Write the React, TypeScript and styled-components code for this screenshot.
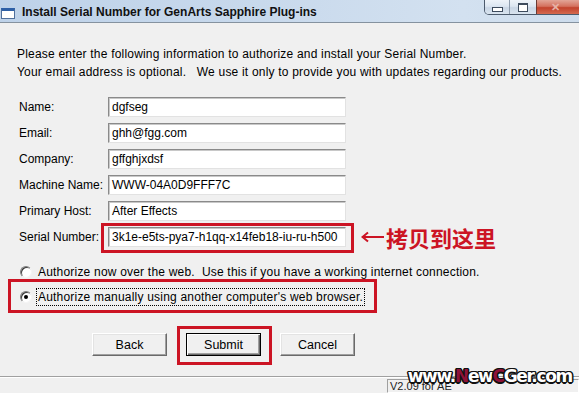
import React from "react";
import styled, { createGlobalStyle } from "styled-components";

const Global = createGlobalStyle`
  html, body { margin: 0; padding: 0; background: #f0f0f0; }
  body { font-family: "Liberation Sans", Arial, sans-serif; }
`;

const RED = "#cc1424";

const Window = styled.div`
  width: 579px;
  height: 393px;
  overflow: hidden;
  display: flex;
  flex-direction: column;
  background: #f0f0f0;
  color: #000;
  font-size: 12px;
`;

const TitleBar = styled.div`
  height: 22px;
  flex: none;
  display: flex;
  align-items: flex-start;
  background: linear-gradient(to right, #bed2e9 0%, #c8d9ec 45%, #d3e1f0 80%, #cddcec 100%);
  border-bottom: 1px solid #85929f;
`;

const AppIcon = styled.div`
  width: 14px;
  height: 11px;
  margin: 8px 0 0 1px;
  box-sizing: border-box;
  background: #fff;
  border: 1px solid #4f6f9c;
  border-top: 3px solid #2d5fa6;
  flex: none;
`;

const Title = styled.div`
  margin-left: 7px;
  line-height: 24px;
  font-weight: bold;
  font-size: 12px;
  color: #111;
  white-space: nowrap;
`;

const Controls = styled.div`
  margin-left: auto;
  margin-right: -4px;
  display: flex;
  height: 14px;
  border: 1px solid #4c5a6c;
  border-top: none;
  border-radius: 0 0 5px 5px;
  overflow: hidden;
`;

const CtrlBtn = styled.div<{ $w: number; $close?: boolean }>`
  width: ${(p) => p.$w}px;
  height: 100%;
  display: flex;
  align-items: center;
  justify-content: center;
  box-sizing: border-box;
  border-left: ${(p) => (p.$close ? "1px solid #6b3a34" : "1px solid #8e9cad")};
  background: ${(p) =>
    p.$close
      ? "linear-gradient(to bottom, #e2a597 0%, #d4715e 45%, #c2422c 55%, #d46a50 100%)"
      : "linear-gradient(to bottom, #eef3f9 0%, #dce6f1 45%, #c9d6e5 55%, #d9e4ef 100%)"};
  &:first-child { border-left: none; }
`;

const MinGlyph = styled.div`
  width: 9px;
  height: 3px;
  margin-top: 4px;
  border: 1px solid #3d4b5d;
  background: #fff;
`;

const MaxGlyph = styled.div`
  width: 8px;
  height: 6px;
  border: 1px solid #3d4b5d;
  border-top-width: 2px;
  background: #fff;
`;

const CloseGlyph = styled.span`
  color: #e6b2a6;
  font-size: 11px;
  font-weight: bold;
  line-height: 1;
  margin-right: 8px;
`;

const Body = styled.div`
  flex: 1;
  padding-top: 22px;
  display: flex;
  flex-direction: column;
`;

const Intro = styled.div`
  padding-left: 17px;
  line-height: 18px;
  letter-spacing: 0.2px;
  white-space: nowrap;
`;

const Form = styled.div`
  margin-top: 16px;
  padding-left: 19px;
  display: flex;
  flex-direction: column;
  gap: 6px;
`;

const Row = styled.div`
  display: flex;
  align-items: center;
  height: 20px;
`;

const Label = styled.div`
  width: 89px;
  flex: none;
  white-space: nowrap;
`;

const Field = styled.div`
  width: 238px;
  height: 20px;
  box-sizing: border-box;
  background: #fff;
  border: 1px solid;
  border-color: #8a8a8a #e2e2e2 #e2e2e2 #8a8a8a;
  box-shadow: inset 1px 1px 0 #c8c8c8;
  padding: 0 2px 0 3px;
  line-height: 18px;
  white-space: nowrap;
  overflow: hidden;
  font-size: 12px;
`;

const Highlight = styled.div<{ $t: number; $r: number; $b: number; $l: number }>`
  position: relative;
  display: inline-flex;
  &::after {
    content: "";
    position: absolute;
    top: ${(p) => p.$t}px;
    right: ${(p) => p.$r}px;
    bottom: ${(p) => p.$b}px;
    left: ${(p) => p.$l}px;
    border: 3px solid ${RED};
    pointer-events: none;
  }
`;

const Note = styled.div`
  display: flex;
  align-items: center;
  margin-left: 15px;
  color: ${RED};
`;

const NoteText = styled.span`
  font-family: "Noto Sans CJK SC", sans-serif;
  font-weight: 700;
  font-size: 22px;
  line-height: 22px;
  margin-left: 1px;
`;

const RadioGroup = styled.div`
  margin-top: 15px;
  padding-left: 20px;
  display: flex;
  flex-direction: column;
  align-items: flex-start;
  gap: 5px;
`;

const RadioRow = styled.div`
  display: inline-flex;
  align-items: center;
  height: 20px;
  gap: 5px;
  white-space: nowrap;
`;

const RadioCircle = styled.div<{ $checked?: boolean }>`
  width: 12px;
  height: 12px;
  box-sizing: border-box;
  border-radius: 50%;
  background: #fff;
  border: 1px solid;
  border-color: #7c7c7c #f4f4f4 #f4f4f4 #7c7c7c;
  box-shadow: inset 1px 1px 0 #3a3a3a;
  display: flex;
  align-items: center;
  justify-content: center;
  &::after {
    content: "";
    width: 4px;
    height: 4px;
    border-radius: 50%;
    background: ${(p) => (p.$checked ? "#000" : "transparent")};
  }
`;

const RadioText = styled.span<{ $focus?: boolean }>`
  padding: 1px 1px;
  letter-spacing: 0.2px;
  outline: ${(p) => (p.$focus ? "1px dotted #000" : "none")};
  outline-offset: 0;
`;

const ButtonRow = styled.div`
  margin-top: 26px;
  padding-left: 92px;
  display: flex;
  gap: 19px;
`;

const Button = styled.div<{ $default?: boolean }>`
  width: 75px;
  height: 23px;
  box-sizing: border-box;
  display: flex;
  align-items: center;
  justify-content: center;
  background: #f0f0f0;
  border: 1px solid;
  border-color: ${(p) => (p.$default ? "#000" : "#fff #6a6a6a #6a6a6a #fff")};
  box-shadow: ${(p) =>
    p.$default
      ? "inset 1px 1px 0 #fff, inset -1px -1px 0 #696969, inset -2px -2px 0 #a0a0a0"
      : "inset -1px -1px 0 #a0a0a0, inset 1px 1px 0 #e3e3e3"};
  font-size: 12.5px;
`;

const StatusBar = styled.div`
  height: 16px;
  flex: none;
  display: flex;
  border-top: 1px solid #a0a0a0;
  box-shadow: inset 0 1px 0 #fff;
`;

const StatusPane = styled.div`
  flex: 1;
`;

const VersionPane = styled.div`
  position: relative;
  width: 192px;
  margin: 2px 0 0 2px;
  box-sizing: border-box;
  border: 1px solid;
  border-color: #a0a0a0 #fff #fff #a0a0a0;
  padding-left: 2px;
  font-size: 11px;
  line-height: 13px;
  color: #222;
  white-space: nowrap;
`;

const Watermark = styled.div`
  position: absolute;
  right: 6px;
  top: -10px;
  font-family: "DejaVu Sans", "Liberation Sans", sans-serif;
  font-weight: bold;
  font-size: 17px;
  letter-spacing: -1.3px;
  color: #fff;
  text-shadow:
    1.5px 0 0 #111, -1.5px 0 0 #111, 0 1.5px 0 #111, 0 -1.5px 0 #111,
    1px 1px 0 #111, -1px -1px 0 #111, 1px -1px 0 #111, -1px 1px 0 #111;
`;

const Accent = styled.span`
  color: #8e1238;
`;

const LeftArrow = () => (
  <svg width="24" height="12" viewBox="0 0 24 12">
    <path d="M23 6 H3" stroke={RED} strokeWidth="2" fill="none" />
    <path d="M7 1.5 L1.5 6 L7 10.5" stroke={RED} strokeWidth="2" fill="none" strokeLinejoin="miter" />
  </svg>
);

const fields: [string, string][] = [
  ["Name:", "dgfseg"],
  ["Email:", "ghh@fgg.com"],
  ["Company:", "gffghjxdsf"],
  ["Machine Name:", "WWW-04A0D9FFF7C"],
  ["Primary Host:", "After Effects"],
];

export default function App() {
  return (
    <Window>
      <Global />
      <TitleBar>
        <AppIcon />
        <Title>Install Serial Number for GenArts Sapphire Plug-ins</Title>
        <Controls>
          <CtrlBtn $w={24}>
            <MinGlyph />
          </CtrlBtn>
          <CtrlBtn $w={27}>
            <MaxGlyph />
          </CtrlBtn>
          <CtrlBtn $w={46} $close>
            <CloseGlyph>✕</CloseGlyph>
          </CtrlBtn>
        </Controls>
      </TitleBar>
      <Body>
        <Intro>
          <div>Please enter the following information to authorize and install your Serial Number.</div>
          <div>Your email address is optional.&nbsp;&nbsp; We use it only to provide you with updates regarding our products.</div>
        </Intro>
        <Form>
          {fields.map(([label, value]) => (
            <Row key={label}>
              <Label>{label}</Label>
              <Field>{value}</Field>
            </Row>
          ))}
          <Row>
            <Label>Serial Number:</Label>
            <Highlight $t={-4} $r={-8} $b={-6} $l={-7}>
              <Field>3k1e-e5ts-pya7-h1qq-x14feb18-iu-ru-h500</Field>
            </Highlight>
            <Note>
              <LeftArrow />
              <NoteText>拷贝到这里</NoteText>
            </Note>
          </Row>
        </Form>
        <RadioGroup>
          <RadioRow>
            <RadioCircle />
            <RadioText>Authorize now over the web.&nbsp; Use this if you have a working internet connection.</RadioText>
          </RadioRow>
          <Highlight $t={-8} $r={-13} $b={-6} $l={-12}>
            <RadioRow>
              <RadioCircle $checked />
              <RadioText $focus>Authorize manually using another computer's web browser.</RadioText>
            </RadioRow>
          </Highlight>
        </RadioGroup>
        <ButtonRow>
          <Button>Back</Button>
          <Highlight $t={-7} $r={-11} $b={-9} $l={-9}>
            <Button $default>Submit</Button>
          </Highlight>
          <Button>Cancel</Button>
        </ButtonRow>
      </Body>
      <StatusBar>
        <StatusPane />
        <VersionPane>
          V2.09 for AE
          <Watermark>
            www.<Accent>N</Accent>ew<Accent>C</Accent>Ger.com
          </Watermark>
        </VersionPane>
      </StatusBar>
    </Window>
  );
}
